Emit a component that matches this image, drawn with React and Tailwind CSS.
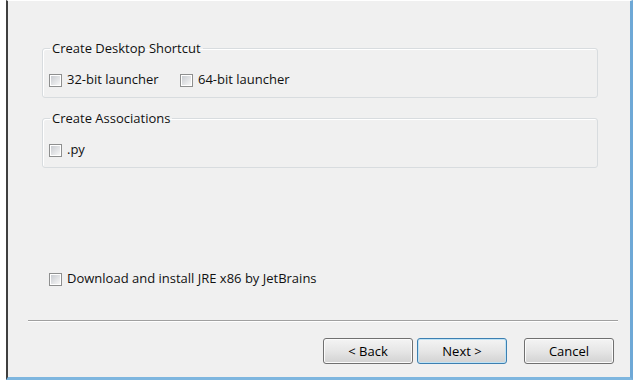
import React from "react";

function Check({ label, className = "" }) {
  return (
    <label className={"flex items-center h-4 " + className}>
      <span className="w-[13px] h-[13px] border border-[#8e8f8f] bg-white p-[1px] shrink-0">
        <span className="block w-full h-full bg-gradient-to-br from-[#c9ccd1] to-[#f7f7f7]" />
      </span>
      <span className="ml-[5px] whitespace-nowrap">{label}</span>
    </label>
  );
}

function Group({ title, children, className = "" }) {
  return (
    <fieldset className={"border border-[#d8dcdf] rounded-[3px] shadow-[inset_1px_1px_0_#ffffff] mx-0 px-[6px] " + className}>
      <legend className="ml-[1px] px-[2px] h-4 leading-4">{title}</legend>
      {children}
    </fieldset>
  );
}

function Btn({ children, primary }) {
  return (
    <button
      className={
        "w-[90px] h-[26px] rounded-[3px] border text-black leading-none bg-gradient-to-b from-[#f4f4f4] via-[#e6e6e6] to-[#d2d2d2] " +
        (primary
          ? "border-[#3c7fb1] shadow-[inset_0_0_0_1px_#bfe3f5]"
          : "border-[#707070] shadow-[inset_0_0_0_1px_#fbfbfb]")
      }
    >
      {children}
    </button>
  );
}

export default function App() {
  return (
    <div className="w-[641px] h-[381px] bg-white text-[13px] text-[#111] font-['Open_Sans',sans-serif]">
      <div className="ml-[6px] w-[627px] h-[380px] flex flex-col bg-[#f0f0f0] border-t border-t-white border-l-2 border-l-[#3f3f3f] border-r-[3px] border-r-[#6ea8d6] border-b-[3px] border-b-[#7eb6df]">
        <div className="px-[34px] pr-[32px]">
          <Group title="Create Desktop Shortcut" className="mt-[39px] pt-[16px] pb-[9px]">
            <div className="flex">
              <Check label="32-bit launcher" className="w-[131px]" />
              <Check label="64-bit launcher" />
            </div>
          </Group>
          <Group title="Create Associations" className="mt-[12px] pt-[16px] pb-[9px]">
            <Check label=".py" />
          </Group>
          <Check label="Download and install JRE x86 by JetBrains" className="mt-[103px] ml-[7px]" />
        </div>
        <div className="mt-[33px] ml-[20px] mr-[12px] h-px bg-[#a0a0a0] shadow-[0_1px_0_#ffffff]" />
        <div className="mt-[17px] mr-[16px] flex justify-end">
          <Btn>&lt; Back</Btn>
          <div className="ml-[4px]">
            <Btn primary>Next &gt;</Btn>
          </div>
          <div className="ml-[17px]">
            <Btn>Cancel</Btn>
          </div>
        </div>
      </div>
    </div>
  );
}
